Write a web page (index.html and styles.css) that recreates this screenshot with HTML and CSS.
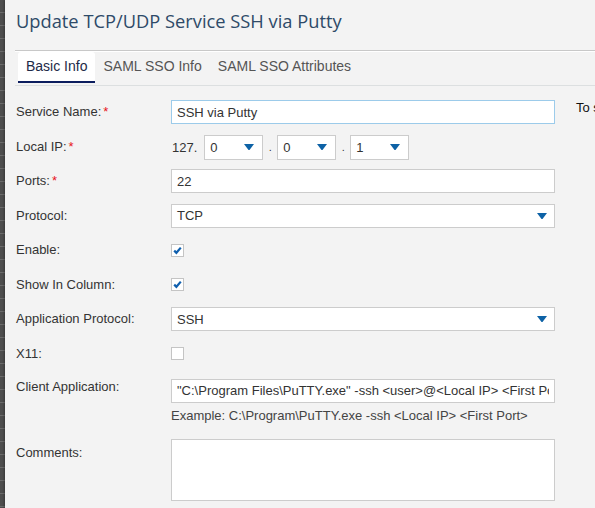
FILE: index.html
```html
<!DOCTYPE html>
<html lang="en">
<head>
	<meta charset="UTF-8">
	<title>Update TCP/UDP Service</title>
	<link rel="stylesheet" href="styles.css">
</head>
<body>
<div class="screen">
	<div class="backdrop"></div>

	<div class="dialog">
		<h1 class="dialog__title">Update TCP/UDP Service SSH via Putty</h1>

		<div class="tabs">
			<div class="tabs__item tabs__item--active">Basic Info</div>
			<div class="tabs__item">SAML SSO Info</div>
			<div class="tabs__item">SAML SSO Attributes</div>
		</div>

		<div class="dialog__body">
			<form class="form">
				<div class="row">
					<label class="row__label">Service Name:<span class="req">*</span></label>
					<input class="field field--focus" type="text" value="SSH via Putty">
				</div>

				<div class="row">
					<label class="row__label">Local IP:<span class="req">*</span></label>
					<div class="ip">
						<span class="ip__prefix">127.</span>
						<div class="select select--small"><span>0</span><svg class="select__arrow" width="10" height="6" viewBox="0 0 10 6"><path d="M0 0H10L5.5 6H4.5Z"/></svg></div>
						<span class="ip__dot">.</span>
						<div class="select select--small"><span>0</span><svg class="select__arrow" width="10" height="6" viewBox="0 0 10 6"><path d="M0 0H10L5.5 6H4.5Z"/></svg></div>
						<span class="ip__dot">.</span>
						<div class="select select--small"><span>1</span><svg class="select__arrow" width="10" height="6" viewBox="0 0 10 6"><path d="M0 0H10L5.5 6H4.5Z"/></svg></div>
					</div>
				</div>

				<div class="row">
					<label class="row__label">Ports:<span class="req">*</span></label>
					<input class="field" type="text" value="22">
				</div>

				<div class="row">
					<label class="row__label">Protocol:</label>
					<div class="select"><span>TCP</span><svg class="select__arrow" width="10" height="6" viewBox="0 0 10 6"><path d="M0 0H10L5.5 6H4.5Z"/></svg></div>
				</div>

				<div class="row">
					<label class="row__label">Enable:</label>
					<div class="check"><svg width="11" height="11" viewBox="0 0 11 11"><path d="M2.2 5.6L4.4 7.8L8.8 2.6" fill="none" stroke="#0f5fae" stroke-width="2.2"/></svg></div>
				</div>

				<div class="row">
					<label class="row__label">Show In Column:</label>
					<div class="check"><svg width="11" height="11" viewBox="0 0 11 11"><path d="M2.2 5.6L4.4 7.8L8.8 2.6" fill="none" stroke="#0f5fae" stroke-width="2.2"/></svg></div>
				</div>

				<div class="row">
					<label class="row__label">Application Protocol:</label>
					<div class="select"><span>SSH</span><svg class="select__arrow" width="10" height="6" viewBox="0 0 10 6"><path d="M0 0H10L5.5 6H4.5Z"/></svg></div>
				</div>

				<div class="row">
					<label class="row__label">X11:</label>
					<div class="check"></div>
				</div>

				<div class="row row--client">
					<label class="row__label row__label--top">Client Application:</label>
					<div class="row__stack">
						<input class="field" type="text" value="&quot;C:\Program Files\PuTTY.exe&quot; -ssh &lt;user&gt;@&lt;Local IP&gt; &lt;First Port&gt;">
						<div class="hint">Example: C:\Program\PuTTY.exe -ssh &lt;Local IP&gt; &lt;First Port&gt;</div>
					</div>
				</div>

				<div class="row row--comments">
					<label class="row__label row__label--low">Comments:</label>
					<textarea class="field field--area"></textarea>
				</div>
			</form>

			<div class="help">To set the client application, use the placeholders listed below.</div>
		</div>
	</div>
</div>
</body>
</html>
```

FILE: styles.css
```css
body {
	margin: 0;
	font-family: "Liberation Sans", Arial, sans-serif;
	font-size: 13px;
	color: #333;
	overflow: hidden;
}

.screen {
	display: flex;
	width: 595px;
	height: 508px;
	overflow: hidden;
}

.backdrop {
	flex: 0 0 5px;
	background: repeating-linear-gradient(to bottom, #4e4e4e 0px, #4e4e4e 12px, #6b6b6b 12px, #6b6b6b 13px);
}

.dialog {
	flex: 1;
	min-width: 0;
	background: #f3f3f3;
	padding: 8px 0 0 10px;
	box-shadow: -1px 0 2px rgba(0, 0, 0, 0.3);
}

.dialog__title {
	margin: 0 0 16px 1px;
	font-family: "Open Sans", sans-serif;
	font-weight: 400;
	font-size: 18.3px;
	line-height: 26px;
	color: #2e4a68;
	white-space: nowrap;
}

.tabs {
	display: flex;
	border-top: 1px solid #c8c8c8;
	border-bottom: 1px solid #dcdfe0;
	box-shadow: inset 0 1px 0 #fff;
	padding: 1px 0 0 3px;
}
.tabs__item {
	font-size: 14px;
	line-height: 29px;
	padding: 0 8px;
	margin-bottom: 2px;
	border-bottom: 2px solid transparent;
	color: #555;
	white-space: nowrap;
}
.tabs__item--active {
	background: #fff;
	color: #1d2a48;
	border-bottom-color: #0c1d5e;
	border-radius: 3px 3px 0 0;
}

.dialog__body {
	display: flex;
	padding: 14px 0 0 1px;
}

.form {
	flex: 0 0 539px;
}

.row {
	display: flex;
	align-items: flex-start;
	min-height: 34.5px;
}
.row__label {
	flex: 0 0 155px;
	line-height: 16px;
	padding-top: 4px;
	white-space: nowrap;
}
.row__label--top { padding-top: 0; }
.row__label--low { padding-top: 6px; }
.row__stack {
	flex: 1;
	display: flex;
	flex-direction: column;
}
.row--client { margin-top: 2.5px; }
.row--comments { margin-top: 16px; }

.req {
	color: #e8141c;
	margin-left: 2px;
}

.field {
	box-sizing: border-box;
	width: 384px;
	height: 24px;
	margin: 0;
	padding: 0 5px;
	border: 1px solid #cccccc;
	background: #fff;
	font: inherit;
	color: #333;
	outline: none;
}
.field--focus { border-color: #9ccbea; }
.field--area {
	height: 62px;
	resize: none;
}

.hint {
	margin-top: 5px;
	line-height: 15px;
	color: #444;
	white-space: nowrap;
}

.ip {
	display: flex;
	align-items: center;
}
.ip__prefix {
	margin: 0 7px 0 1px;
}
.ip__dot {
	width: 14px;
	text-align: center;
	font-size: 11px;
}

.select {
	box-sizing: border-box;
	width: 384px;
	height: 24px;
	display: flex;
	align-items: center;
	justify-content: space-between;
	padding: 0 7px 0 5px;
	border: 1px solid #cccccc;
	background: #fff;
}
.select--small {
	width: 59px;
	height: 25px;
	padding-right: 8px;
}
.select__arrow {
	fill: #0d62a6;
}

.check {
	box-sizing: border-box;
	width: 13px;
	height: 13px;
	margin-top: 5.5px;
	border: 1px solid #c4c4c4;
	background: #fff;
	display: flex;
	align-items: center;
	justify-content: center;
}

.help {
	margin-left: 21px;
	line-height: 16px;
	color: #111;
	white-space: nowrap;
}
```
